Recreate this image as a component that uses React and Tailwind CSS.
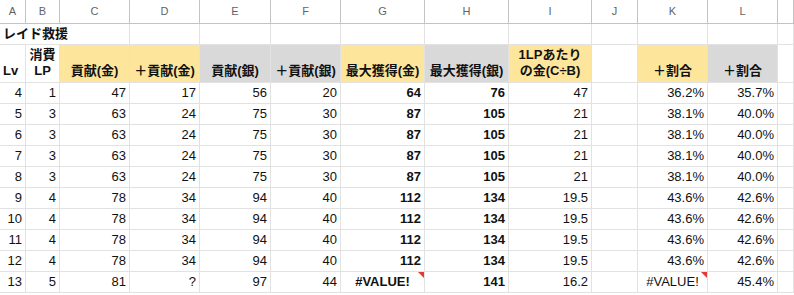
import React from 'react';

const FONT = '"Liberation Sans", Arial, "Noto Sans CJK JP", sans-serif';

const letters = ['A', 'B', 'C', 'D', 'E', 'F', 'G', 'H', 'I', 'J', 'K', 'L', ''];

const gold = 'bg-[#fde59c]';
const grey = 'bg-[#d9d9d9]';

const headers = [
  { lines: ['Lv'], align: 'items-start', bg: 'bg-white' },
  { lines: ['消費', 'LP'], align: 'items-center', bg: 'bg-white' },
  { lines: ['貢献(金)'], align: 'items-center', bg: gold },
  { lines: ['＋貢献(金)'], align: 'items-center', bg: gold },
  { lines: ['貢献(銀)'], align: 'items-center', bg: grey },
  { lines: ['＋貢献(銀)'], align: 'items-center', bg: grey },
  { lines: ['最大獲得(金)'], align: 'items-center', bg: gold },
  { lines: ['最大獲得(銀)'], align: 'items-center', bg: grey },
  { lines: ['1LPあたり', 'の金(C÷B)'], align: 'items-center', bg: gold },
  { lines: [], align: 'items-center', bg: 'bg-white' },
  { lines: ['＋割合'], align: 'items-center', bg: gold },
  { lines: ['＋割合'], align: 'items-center', bg: grey },
  { lines: [], align: 'items-center', bg: 'bg-white' },
];

const rows = [
  ['4', '1', '47', '17', '56', '20', '64', '76', '47', '', '36.2%', '35.7%'],
  ['5', '3', '63', '24', '75', '30', '87', '105', '21', '', '38.1%', '40.0%'],
  ['6', '3', '63', '24', '75', '30', '87', '105', '21', '', '38.1%', '40.0%'],
  ['7', '3', '63', '24', '75', '30', '87', '105', '21', '', '38.1%', '40.0%'],
  ['8', '3', '63', '24', '75', '30', '87', '105', '21', '', '38.1%', '40.0%'],
  ['9', '4', '78', '34', '94', '40', '112', '134', '19.5', '', '43.6%', '42.6%'],
  ['10', '4', '78', '34', '94', '40', '112', '134', '19.5', '', '43.6%', '42.6%'],
  ['11', '4', '78', '34', '94', '40', '112', '134', '19.5', '', '43.6%', '42.6%'],
  ['12', '4', '78', '34', '94', '40', '112', '134', '19.5', '', '43.6%', '42.6%'],
  ['13', '5', '81', '?', '97', '44', '#VALUE!', '141', '16.2', '', '#VALUE!', '45.4%'],
];

function ErrorMark() {
  return (
    <svg className="absolute top-0 right-0" width="6" height="6" viewBox="0 0 6 6">
      <polygon points="0,0 6,0 6,6" fill="#e53935" />
    </svg>
  );
}

function DataCell({ value, col }) {
  const isError = value === '#VALUE!';
  const bold = col === 6 || col === 7;
  return (
    <div
      className={`relative flex items-center px-[3px] border-r border-b border-[#e2e2e2] bg-white ${
        isError ? 'justify-center' : 'justify-end'
      } ${bold ? 'font-bold' : ''}`}
    >
      {value}
      {isError && <ErrorMark />}
    </div>
  );
}

export default function App() {
  return (
    <div
      className="w-[794px] h-[295px] overflow-hidden bg-white text-[13px] text-[#111]"
      style={{ fontFamily: FONT }}
    >
      <div className="grid grid-cols-[26px_34px_70px_70px_71px_70px_84px_84px_83px_46px_70px_70px_1fr] grid-rows-[24px_21px_38px_repeat(10,21px)]">
        {/* Column letters */}
        {letters.map((l, i) => (
          <div
            key={'h' + i}
            className="flex items-center justify-center border-r border-b border-[#c4c4c4] text-[11px] text-[#5f6368]"
          >
            {l}
          </div>
        ))}

        {/* Title row */}
        <div className="col-span-3 flex items-center px-[3px] font-bold border-r border-b border-[#e2e2e2] whitespace-nowrap">
          レイド救援
        </div>
        {letters.slice(3).map((_, i) => (
          <div key={'t' + i} className="border-r border-b border-[#e2e2e2]" />
        ))}

        {/* Header row */}
        {headers.map((h, i) => (
          <div
            key={'c' + i}
            className={`flex flex-col justify-end ${h.align} text-center px-[3px] pb-[3px] leading-[16px] font-bold whitespace-nowrap border-r border-b border-[#e2e2e2] ${h.bg}`}
          >
            {h.lines.map((line) => (
              <span key={line}>{line}</span>
            ))}
          </div>
        ))}

        {/* Data rows */}
        {rows.map((r, ri) => (
          <React.Fragment key={'r' + ri}>
            {r.map((v, ci) => (
              <DataCell key={ci} value={v} col={ci} />
            ))}
            <div className="border-r border-b border-[#e2e2e2]" />
          </React.Fragment>
        ))}
      </div>
    </div>
  );
}
